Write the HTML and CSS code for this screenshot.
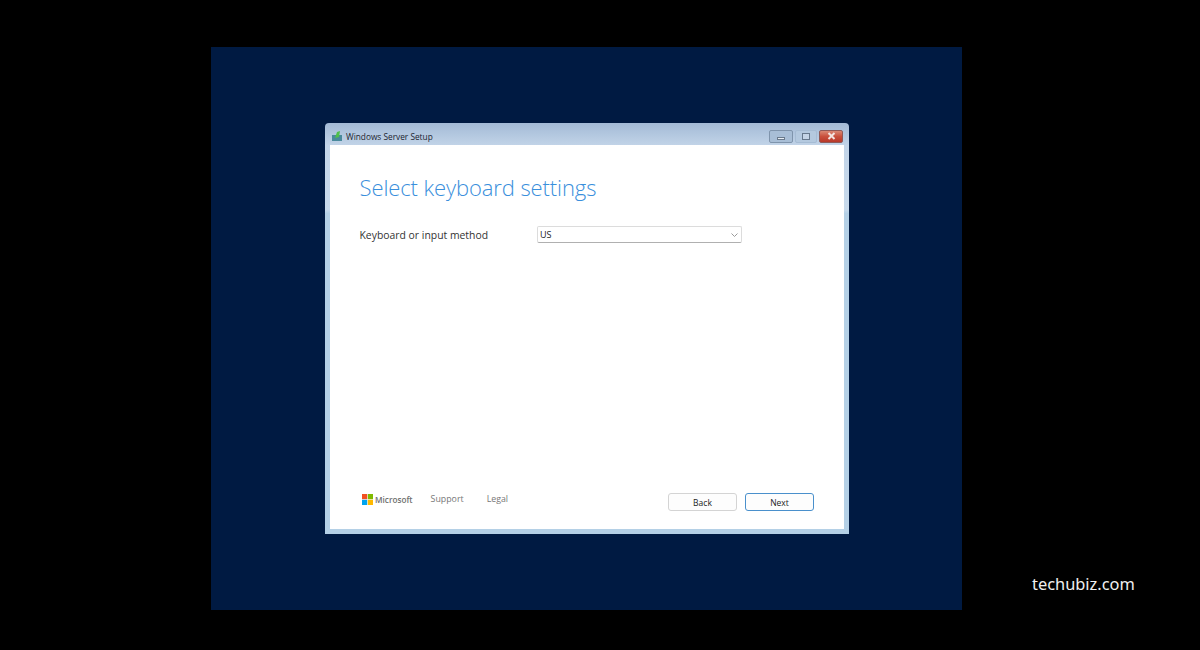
FILE: index.html
```html
<!DOCTYPE html>
<html lang="en">
<head>
    <meta charset="UTF-8">
    <meta name="viewport" content="width=device-width, initial-scale=1.0">
    <title>Windows Server Setup</title>
    <link rel="stylesheet" href="styles.css">
</head>
<body>
    <div class="screen">
        <div class="window">
            <div class="titlebar">
                <svg class="app-icon" width="10" height="10" viewBox="0 0 10 10">
                    <rect x="0" y="4" width="10" height="6" fill="#4a8a9c"/>
                    <path d="M3 7 L5 1 L8 0 L7 6 Z" fill="#4fc04a"/>
                </svg>
                <span class="title">Windows Server Setup</span>
                <div class="controls">
                    <div class="ctl ctl-min"><span class="glyph-min"></span></div>
                    <div class="ctl ctl-max"><span class="glyph-max"></span></div>
                    <div class="ctl ctl-close">
                        <svg width="9" height="8" viewBox="0 0 9 8">
                            <path d="M1.5 1 L7.5 7 M7.5 1 L1.5 7" stroke="#f4e4e0" stroke-width="2"/>
                        </svg>
                    </div>
                </div>
            </div>
            <div class="client">
                <h1>Select keyboard settings</h1>
                <div class="form-row">
                    <label>Keyboard or input method</label>
                    <div class="select">
                        <span>US</span>
                        <svg width="7" height="4" viewBox="0 0 7 4">
                            <path d="M0.5 0.5 L3.5 3.5 L6.5 0.5" fill="none" stroke="#9a9a9a" stroke-width="1"/>
                        </svg>
                    </div>
                </div>
                <div class="footer">
                    <div class="links">
                        <svg class="ms-logo" width="11" height="11" viewBox="0 0 11 11">
                            <rect width="5.2" height="5.2" fill="#f25022"/>
                            <rect x="5.8" width="5.2" height="5.2" fill="#7fba00"/>
                            <rect y="5.8" width="5.2" height="5.2" fill="#00a4ef"/>
                            <rect x="5.8" y="5.8" width="5.2" height="5.2" fill="#ffb900"/>
                        </svg>
                        <span class="ms-name">Microsoft</span>
                        <a class="link-support">Support</a>
                        <a>Legal</a>
                    </div>
                    <div class="buttons">
                        <button class="btn">Back</button>
                        <button class="btn btn-next">Next</button>
                    </div>
                </div>
            </div>
        </div>
    </div>
    <div class="watermark">techubiz.com</div>
</body>
</html>
```

FILE: styles.css
```css
* {
    margin: 0;
    padding: 0;
    box-sizing: border-box;
}

body {
    width: 1200px;
    height: 650px;
    background: #000;
    padding: 47px 238px 40px 211px;
    font-family: "Open Sans", "Noto Sans", sans-serif;
    overflow: hidden;
}

.screen {
    height: 563px;
    background: #001a42;
    padding: 76px 113px 0 114px;
}

.window {
    width: 524px;
    height: 411px;
    border-radius: 4px 4px 0 0;
    padding: 0 5px 5px;
    background: linear-gradient(180deg, #a3bad6 0%, #c2d4e8 5.5%, #c8daec 21%, #b4d0e6 22%, #b4d0e6 100%);
    display: flex;
    flex-direction: column;
}

.titlebar {
    height: 22px;
    display: flex;
    align-items: center;
    padding-top: 5px;
    color: #1c2430;
}

.app-icon {
    margin-right: 4px;
    margin-left: 2px;
    margin-bottom: 2px;
}

.title {
    font-size: 8.3px;
}

.controls {
    margin-left: auto;
    margin-right: 1px;
    display: flex;
    gap: 2px;
    align-items: center;
    margin-bottom: 1px;
}

.ctl {
    height: 13px;
    border-radius: 2px;
    display: flex;
    align-items: center;
    justify-content: center;
}

.ctl-min {
    width: 24px;
    background: #a8bed6;
    border: 1px solid #7f94ac;
}

.ctl-max {
    width: 22px;
    background: #b4c9df;
    border: 1px solid #a6bcd4;
}

.ctl-close {
    width: 24px;
    background: linear-gradient(180deg, #d98874 0%, #c9503c 50%, #b8382a 100%);
    border: 1px solid #8f5a58;
}

.glyph-min {
    width: 8px;
    height: 3px;
    margin-top: 4px;
    background: #e8eef4;
    border: 1px solid #6a7a8c;
}

.glyph-max {
    width: 8px;
    height: 7px;
    border: 1px solid #66788c;
    background: #c4d4e6;
}

.client {
    flex: 1;
    background: #fff;
    padding: 27px 30px 18px 29.5px;
    display: flex;
    flex-direction: column;
}

h1 {
    font-size: 22px;
    font-weight: 300;
    line-height: 30px;
    letter-spacing: -0.1px;
    color: #3a8fdc;
}

.form-row {
    display: flex;
    align-items: center;
    margin-top: 24px;
}

.form-row label {
    width: 177.5px;
    font-size: 10.4px;
    color: #333;
}

.select {
    width: 205px;
    height: 17px;
    border: 1px solid #dcdcdc;
    border-bottom-color: #b0b0b0;
    border-radius: 2px;
    display: flex;
    align-items: center;
    justify-content: space-between;
    padding: 0 3px 0 2px;
    font-size: 9px;
    color: #222;
}

.footer {
    margin-top: auto;
    display: flex;
    justify-content: space-between;
    align-items: flex-start;
}

.links {
    display: flex;
    align-items: center;
    margin-left: 2.5px;
    font-size: 8.8px;
    color: #777;
}

.ms-logo {
    margin-right: 2px;
}

.ms-name {
    font-size: 8.2px;
    font-weight: 600;
    color: #6e6e6e;
    margin-right: 18px;
}

.link-support {
    margin-right: 23px;
}

.buttons {
    display: flex;
    gap: 8px;
}

.btn {
    width: 69px;
    height: 18px;
    background: #fdfdfd;
    border: 1px solid #d4d4d4;
    border-radius: 3px;
    font-family: inherit;
    font-size: 8.5px;
    color: #222;
}

.btn-next {
    border-color: #4a90cc;
}

.watermark {
    position: absolute;
    left: 1032px;
    top: 572px;
    font-size: 16.4px;
    color: #f0f0f0;
    font-family: "Noto Sans", sans-serif;
}
```
